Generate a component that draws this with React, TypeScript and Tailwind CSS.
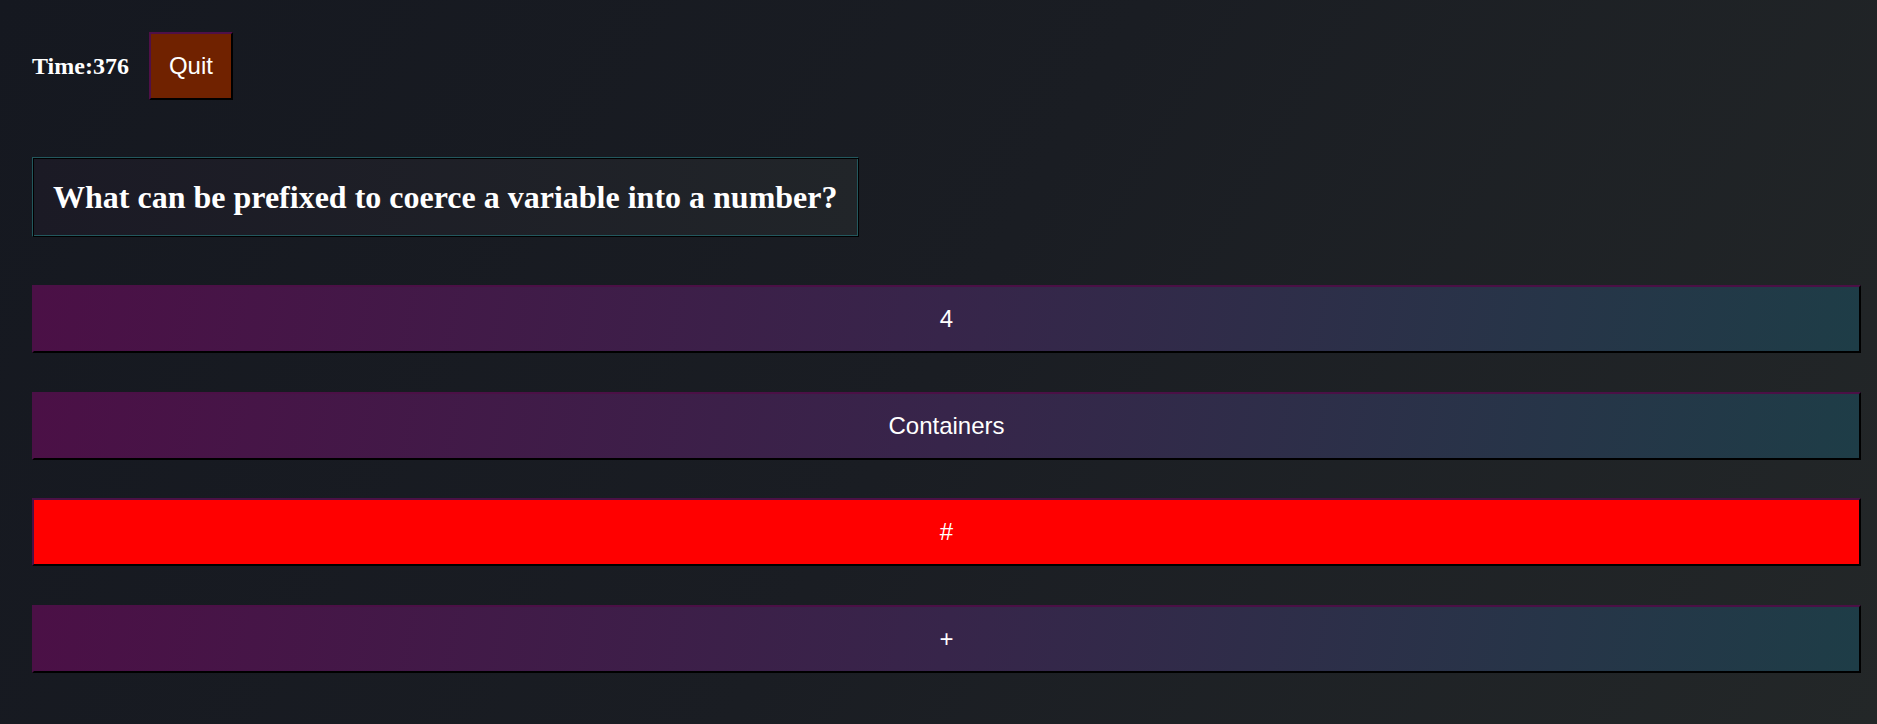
const question = "What can be prefixed to coerce a variable into a number?";

const answers = [
  { text: "4", wrong: false },
  { text: "Containers", wrong: false },
  { text: "#", wrong: true },
  { text: "+", wrong: false },
];

export default function App() {
  return (
    <div className="min-h-screen w-full bg-[linear-gradient(120deg,#151820_0%,#1a1d23_50%,#232728_100%)] pl-8 pr-4 pt-8 pb-12 font-['Liberation_Sans',Arial,sans-serif] text-white">
      {/* Header */}
      <div className="flex items-center gap-5">
        <h2 className="font-['Liberation_Serif','Times_New_Roman',serif] text-[24px] font-bold text-white">
          Time:376
        </h2>
        <button className="h-[68px] border-2 border-t-[#4f1048] border-l-[#4f1048] border-r-black border-b-black bg-[#702200] px-[18px] text-[24px] text-white">
          Quit
        </button>
      </div>

      {/* Question */}
      <div className="mt-[57px] inline-block border border-t-[#23585e] border-l-[#23585e] border-r-black border-b-black bg-[linear-gradient(90deg,#1b1a25,#212529)] px-5 py-[21px] shadow-[inset_1px_1px_0_#000,inset_-1px_-1px_0_#23585e]">
        <h1 className="font-['Liberation_Serif','Times_New_Roman',serif] text-[32px] leading-[36px] font-bold text-white">
          {question}
        </h1>
      </div>

      {/* Answers */}
      <div className="mt-[48px] flex flex-col gap-[38.7px]">
        {answers.map((a) => (
          <button
            key={a.text}
            className={
              a.wrong
                ? "flex h-[68px] w-full items-center justify-center border-2 border-t-[#4b1046] border-l-[#4b1046] border-r-black border-b-black bg-[#ff0000] text-[24px] text-white"
                : "flex h-[68px] w-full items-center justify-center border-2 border-t-[#4b1046] border-l-[#4b1046] border-r-black border-b-black bg-[linear-gradient(100deg,#4b1046,#37254a_50%,#1e3d47)] text-[24px] text-white"
            }
          >
            {a.text}
          </button>
        ))}
      </div>
    </div>
  );
}
